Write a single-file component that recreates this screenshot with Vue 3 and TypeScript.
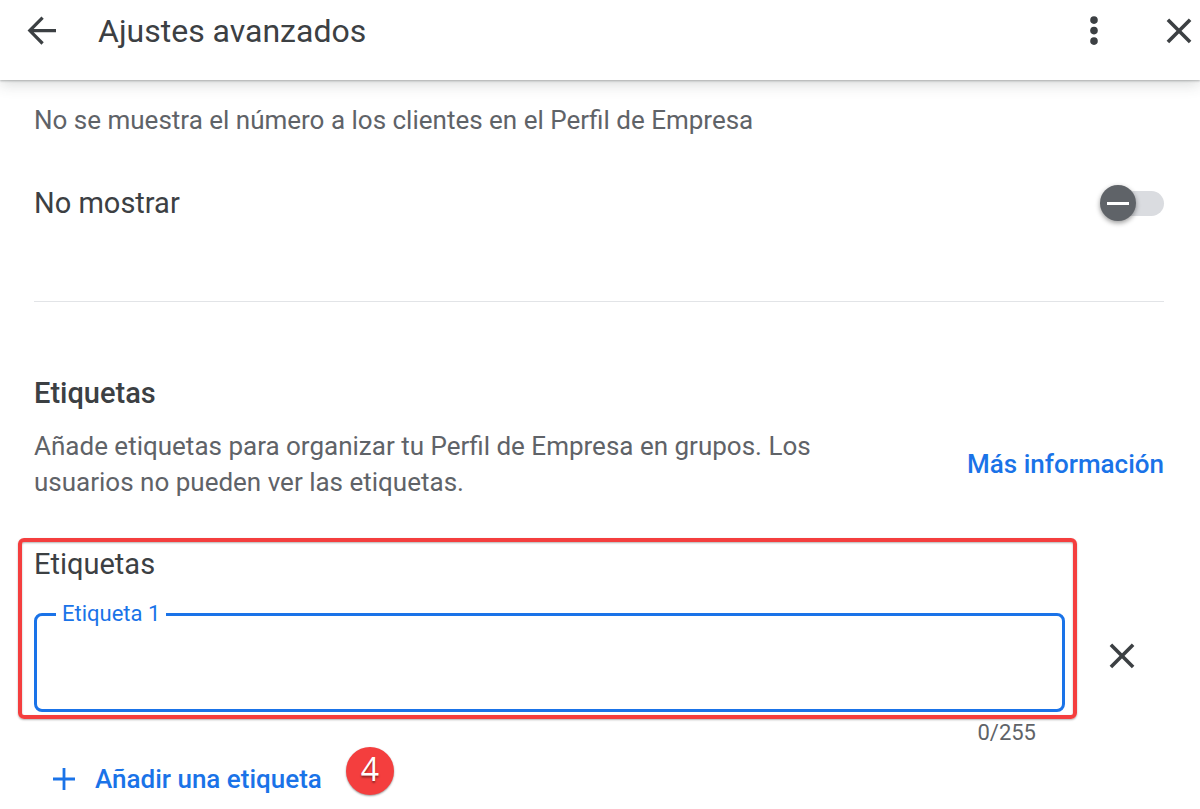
<script setup lang="ts">
import { computed, ref } from 'vue'

const MAX_LENGTH = 255
const hidePhone = ref(false)
const tag = ref('')
const counter = computed(() => `${tag.value.length}/${MAX_LENGTH}`)
</script>

<template>
  <div class="page">
    <header class="topbar">
      <button class="icon-button" type="button" aria-label="Atrás">
        <svg width="32" height="32" viewBox="0 0 32 32" fill="none" stroke="currentColor" stroke-width="3.2">
          <path d="M30 15.6H4.5M16.6 2.7L3.8 15.6l12.8 12.9" />
        </svg>
      </button>
      <h1 class="title">Ajustes avanzados</h1>
      <button class="icon-button" type="button" aria-label="Más opciones">
        <svg width="32" height="32" viewBox="0 0 32 32" fill="currentColor">
          <circle cx="16" cy="5.1" r="3.8" />
          <circle cx="16" cy="15.6" r="3.8" />
          <circle cx="16" cy="26.1" r="3.8" />
        </svg>
      </button>
      <button class="icon-button close" type="button" aria-label="Cerrar">
        <svg width="32" height="32" viewBox="0 0 32 32" fill="none" stroke="currentColor" stroke-width="3.6">
          <path d="M4.9 4.7l22.2 22.2M27.1 4.7L4.9 26.9" />
        </svg>
      </button>
    </header>

    <main class="content">
      <p class="text">No se muestra el número a los clientes en el Perfil de Empresa</p>

      <div class="switch-row">
        <label class="subheading" for="hide-phone">No mostrar</label>
        <input id="hide-phone" v-model="hidePhone" class="switch" type="checkbox" role="switch" />
      </div>

      <hr class="divider" />

      <section>
        <h2 class="heading">Etiquetas</h2>
        <div class="intro">
          <p class="text intro-text">
            Añade etiquetas para organizar tu Perfil de Empresa en grupos. Los usuarios no pueden ver las etiquetas.
          </p>
          <a class="link" href="#">Más información</a>
        </div>

        <div class="tag-row">
          <div class="tag-group">
            <h3 class="subheading">Etiquetas</h3>
            <fieldset class="field">
              <legend class="legend"><label for="tag-1">Etiqueta 1</label></legend>
              <input id="tag-1" v-model="tag" class="field-input" type="text" :maxlength="MAX_LENGTH" />
            </fieldset>
          </div>
          <button class="icon-button remove" type="button" aria-label="Quitar etiqueta">
            <svg width="32" height="32" viewBox="0 0 32 32" fill="none" stroke="currentColor" stroke-width="3.6">
              <path d="M4.9 4.7l22.2 22.2M27.1 4.7L4.9 26.9" />
            </svg>
          </button>
        </div>
        <div class="counter">{{ counter }}</div>

        <div class="add-row">
          <button class="add" type="button">
            <svg width="22" height="22" viewBox="0 0 22 22" fill="none" stroke="currentColor" stroke-width="2.8">
              <path d="M11 0v22M0 11h22" />
            </svg>
            Añadir una etiqueta
          </button>
          <span class="step">4</span>
        </div>
      </section>
    </main>
  </div>
</template>

<style>
body {
  background: #fff;
}
</style>

<style scoped>
.page {
  font-family: Roboto, "Liberation Sans", sans-serif;
  color: #3c4043;
}

h1,
h2,
h3,
p {
  margin: 0;
}

button {
  margin: 0;
  border: 0;
  padding: 0;
  background: none;
  color: inherit;
  font: inherit;
  cursor: pointer;
}

svg {
  display: block;
  flex: none;
}

.topbar {
  display: flex;
  align-items: center;
  height: 62px;
  padding: 0 5px 18px 26px;
  box-shadow: 0 1px 2px rgba(60, 64, 67, 0.35), 0 4px 14px rgba(60, 64, 67, 0.2);
}

.title {
  flex: 1;
  margin-left: 40px;
  font-size: 32px;
  line-height: 40px;
  font-weight: 400;
}

.close {
  margin-left: 53px;
}

.content {
  padding: 22px 36px 14px 34px;
}

.text {
  color: #5f6368;
  font-size: 26px;
  line-height: 36px;
}

.switch-row {
  display: flex;
  align-items: center;
  justify-content: space-between;
  margin-top: 47px;
}

.subheading {
  font-size: 29px;
  line-height: 36px;
  font-weight: 400;
}

.switch {
  appearance: none;
  display: grid;
  align-items: center;
  width: 64px;
  height: 36px;
  margin: 0;
  cursor: pointer;
}

.switch::before,
.switch::after {
  content: "";
  grid-area: 1 / 1;
}

.switch::before {
  height: 25px;
  margin-left: 4px;
  border-radius: 13px;
  background: #dadce0;
}

.switch::after {
  width: 36px;
  height: 36px;
  border-radius: 50%;
  background: linear-gradient(#fff, #fff) center / 22px 3px no-repeat #5f6368;
  box-shadow: 0 2px 5px rgba(0, 0, 0, 0.4);
}

.switch:checked::after {
  justify-self: end;
  background-color: #1a73e8;
}

.divider {
  height: 1px;
  margin: 80px 0 73px;
  border: 0;
  background: #e2e4e7;
}

.heading {
  font-size: 29px;
  line-height: 36px;
  font-weight: 500;
}

.intro {
  display: flex;
  align-items: center;
  justify-content: space-between;
  margin-top: 17px;
}

.intro-text {
  flex: 0 1 800px;
}

.link {
  color: #1a73e8;
  font-size: 26px;
  line-height: 36px;
  font-weight: 500;
  text-decoration: none;
}

.tag-row {
  display: flex;
  align-items: flex-end;
  margin: 38px 0 0 -16px;
}

.tag-group {
  flex: 1;
  border: 4px solid #f43e3e;
  border-radius: 6px;
  padding: 4px 8px 3px 12px;
  box-shadow: 0 1px 2px rgba(0, 0, 0, 0.3), inset 0 1px 2px rgba(0, 0, 0, 0.3);
}

.field {
  min-width: 0;
  margin: 20px 0 0;
  border: 3px solid #1a73e8;
  border-radius: 8px;
  padding: 0 19px;
}

.legend {
  padding: 0 6px;
  color: #1a73e8;
  font-size: 22px;
  line-height: 24px;
}

.field-input {
  display: block;
  box-sizing: border-box;
  width: 100%;
  height: 83px;
  border: 0;
  padding: 0 6px;
  outline: 0;
  background: none;
  color: #3c4043;
  font: inherit;
  font-size: 26px;
}

.remove {
  margin: 0 26px 47px 29px;
}

.counter {
  margin-right: 128px;
  color: #5f6368;
  font-size: 22px;
  line-height: 28px;
  text-align: right;
}

.add-row {
  display: flex;
  align-items: flex-start;
  gap: 24px;
  padding-left: 19px;
}

.add {
  display: flex;
  align-items: center;
  gap: 20px;
  padding-top: 14px;
  color: #1a73e8;
  font-size: 26px;
  line-height: 36px;
  font-weight: 500;
}

.step {
  width: 48px;
  height: 48px;
  border-radius: 50%;
  background: #f43e3e;
  box-shadow: 0 1px 2px rgba(0, 0, 0, 0.4);
  color: #fff;
  font-family: "Open Sans", "Noto Sans", sans-serif;
  font-size: 32px;
  line-height: 44px;
  text-align: center;
  text-shadow: 0 2px 2px rgba(0, 0, 0, 0.4);
}
</style>
